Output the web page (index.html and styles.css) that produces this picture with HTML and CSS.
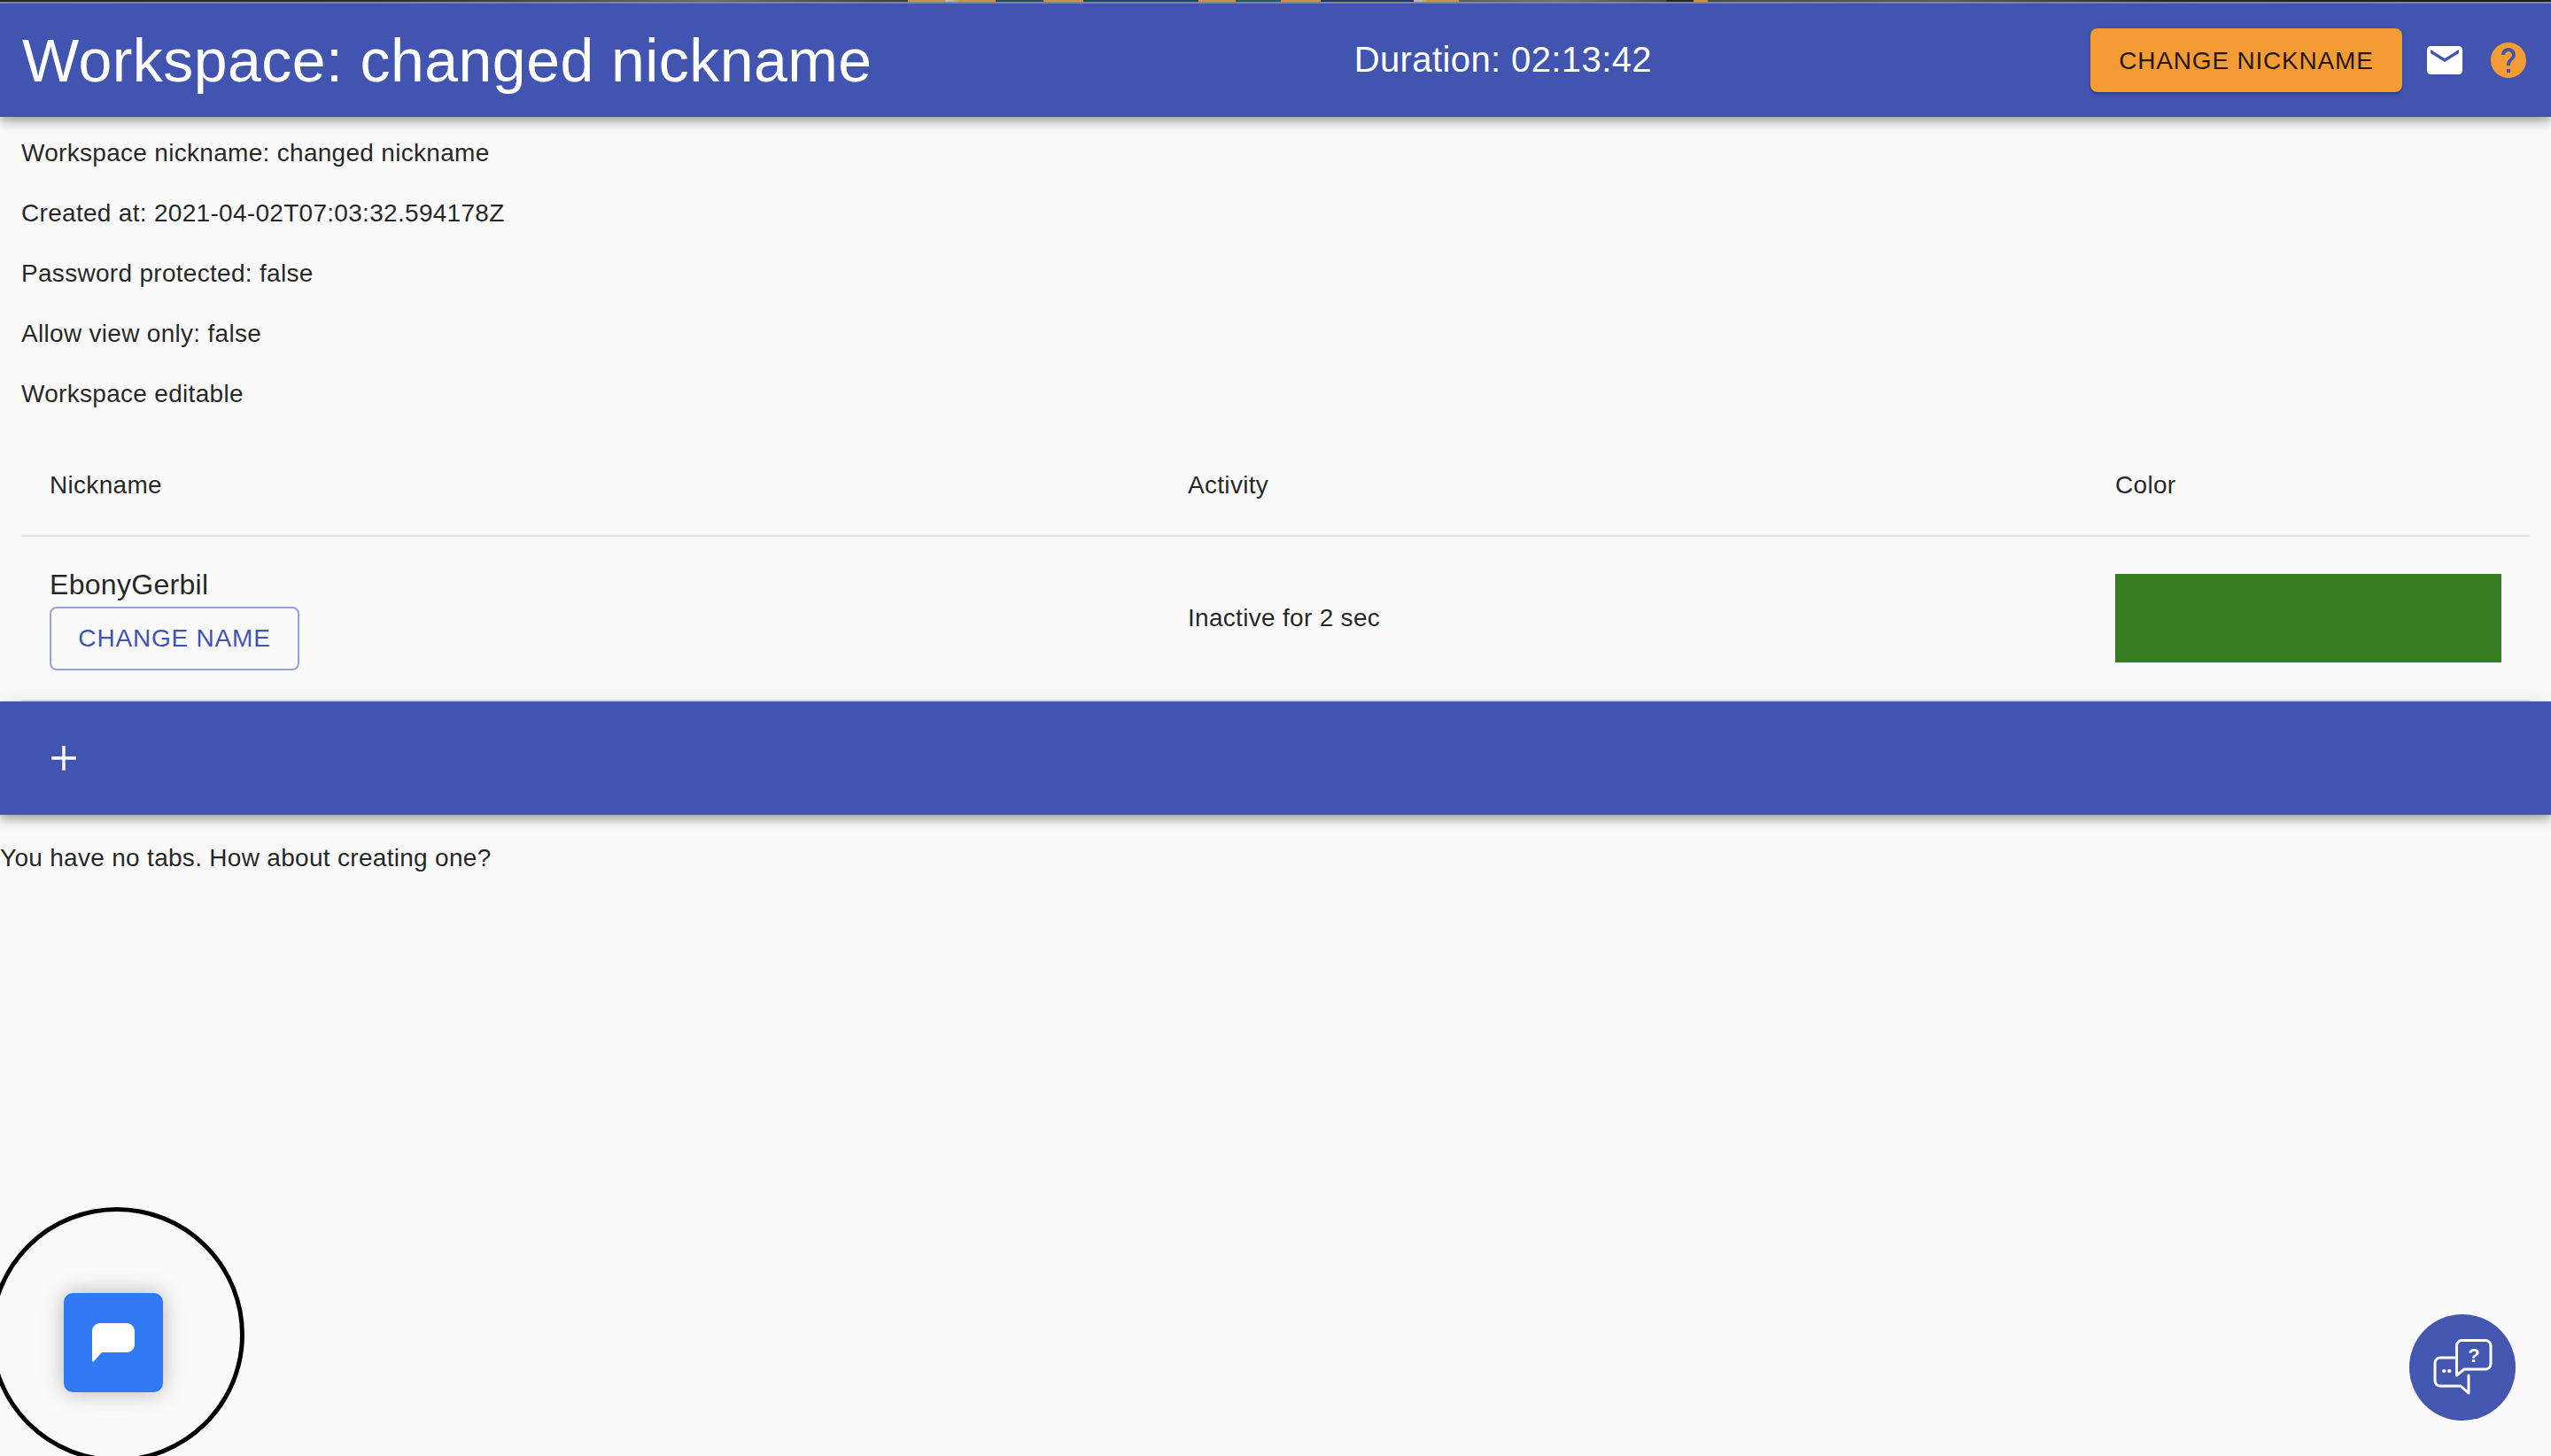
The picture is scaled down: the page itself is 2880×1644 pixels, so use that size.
FILE: index.html
```html
<!DOCTYPE html>
<html lang="en">
<head>
  <meta charset="UTF-8">
  <title>Workspace: changed nickname</title>
  <link rel="stylesheet" href="styles.css">
</head>
<body>
  <div class="top-strip"></div>

  <header class="app-bar">
    <h1 class="app-title">Workspace: changed nickname</h1>
    <div class="duration">Duration: 02:13:42</div>
    <div class="app-actions">
      <button class="btn-nickname">CHANGE NICKNAME</button>
      <svg class="icon-mail" viewBox="0 0 24 24"><path d="M20 4H4c-1.100 0-2 .9-2 2v12c0 1.100.9 2 2 2h16c1.100 0 2-.9 2-2V6c0-1.100-.9-2-2-2zm0 4l-8 5-8-5V6l8 5 8-5v2z"/></svg>
      <svg class="icon-help" viewBox="0 0 24 24"><path d="M12 2C6.480 2 2 6.480 2 12s4.480 10 10 10 10-4.480 10-10S17.520 2 12 2zm1 17h-2v-2h2v2zm2.070-7.750l-.9.920C13.450 12.900 13 13.500 13 15h-2v-.5c0-1.100.45-2.100 1.170-2.830l1.240-1.260c.37-.36.590-.86.590-1.410 0-1.100-.9-2-2-2s-2 .9-2 2H8c0-2.210 1.790-4 4-4s4 1.790 4 4c0 .88-.36 1.680-.93 2.250z"/></svg>
    </div>
  </header>

  <section class="info">
    <p>Workspace nickname: changed nickname</p>
    <p>Created at: 2021-04-02T07:03:32.594178Z</p>
    <p>Password protected: false</p>
    <p>Allow view only: false</p>
    <p>Workspace editable</p>
  </section>

  <table class="users">
    <thead>
      <tr>
        <th class="col-name">Nickname</th>
        <th class="col-activity">Activity</th>
        <th class="col-color">Color</th>
      </tr>
    </thead>
    <tbody>
      <tr>
        <td>
          <div class="user-name">EbonyGerbil</div>
          <button class="btn-name">CHANGE NAME</button>
        </td>
        <td>Inactive for 2 sec</td>
        <td><div class="color-box"></div></td>
      </tr>
    </tbody>
  </table>

  <div class="tab-bar">
    <svg class="icon-plus" viewBox="0 0 28 28"><path d="M12.300 0h3.400v12.300H28v3.400H15.700V28h-3.400V15.700H0v-3.400h12.300z"/></svg>
  </div>

  <p class="no-tabs">You have no tabs. How about creating one?</p>

  <!-- chat button with the ring drawn round it -->
  <div class="ring"></div>
  <div class="chat-btn">
    <svg viewBox="0 0 48 44"><path d="M9 0h30c5 0 9 4 9 9v15c0 5-4 9-9 9H11L2 43c-1 1-2 .5-2-1V9c0-5 4-9 9-9z"/></svg>
  </div>

  <div class="help-fab">
    <svg viewBox="0 0 68 66" fill="none" stroke="#fff" stroke-width="3" stroke-linecap="round" stroke-linejoin="round">
      <path d="M26 22H9a6 6 0 0 0-6 6v20a6 6 0 0 0 6 6h23l9 8V42"/>
      <path d="M33.500 2.500H60a6 6 0 0 1 6 6V29a6 6 0 0 1-6 6H36l-8.500 7V8.500a6 6 0 0 1 6-6z"/>
      <path d="M13 37h.5M19 37h.5" stroke-width="4"/>
      <text class="help-q" x="47" y="27">?</text>
    </svg>
  </div>
</body>
</html>
```

FILE: styles.css
```css
* {
  box-sizing: border-box;
}

html, body {
  height: 100%;
}

body {
  margin: 0;
  background: #fafafa;
  color: rgba(0, 0, 0, 0.87);
  font-family: "Liberation Sans", Arial, sans-serif;
  font-size: 28px;
  letter-spacing: 0.3px;
  overflow: hidden;
}

button {
  font-family: inherit;
  cursor: pointer;
}

.top-strip {
  height: 4px;
  border-bottom: 2px solid #8b908d;
  background: linear-gradient(to right,
    #23292a 0, #2b3332 446px, #6b7473 800px, #3c4342 1025px,
    #d99a3a 1025px, #d99a3a 1067px, #d8b4bc 1067px, #d8b4bc 1075px,
    #d99a3a 1083px, #d99a3a 1124px, #24506a 1124px, #24506a 1178px,
    #d99a3a 1178px, #d99a3a 1223px, #1f4a72 1223px, #1f4a72 1353px,
    #d99a3a 1353px, #d99a3a 1395px, #2a5f5f 1395px, #2a5f5f 1446px,
    #d99a3a 1446px, #d99a3a 1491px, #1e3a70 1491px, #1e3a70 1596px,
    #d8b4bc 1596px, #d8b4bc 1605px, #d99a3a 1611px, #d99a3a 1647px,
    #5b6664 1647px, #6f7a78 1760px, #4a5352 1880px, #23292a 1883px,
    #23292a 1912px, #d99a3a 1912px, #d99a3a 1928px, #4a5352 1928px,
    #5a6462 2200px, #23292a 2454px, #1c2122 2880px);
}

.app-bar {
  height: 128px;
  background: #4154b0;
  color: #fff;
  display: flex;
  align-items: center;
  padding: 0 24px 0 25px;
  box-shadow: 0 4px 8px -2px rgba(0, 0, 0, 0.2), 0 8px 10px 0 rgba(0, 0, 0, 0.14), 0 2px 20px 0 rgba(0, 0, 0, 0.12);
  position: relative;
}

.app-title {
  margin: 0;
  font-size: 68px;
  font-weight: 400;
  letter-spacing: 0.45px;
}

.duration {
  margin: -2px 0 0 544px;
  font-size: 40px;
  letter-spacing: 0.4px;
}

.app-actions {
  margin-left: auto;
  display: flex;
  align-items: center;
  gap: 24px;
}

.btn-nickname {
  width: 352px;
  height: 72px;
  padding-top: 2px;
  background: #f39c36;
  color: rgba(0, 0, 0, 0.87);
  border: 0;
  border-radius: 8px;
  font-size: 28px;
  letter-spacing: 0.8px;
  box-shadow: 0 3px 3px -1px rgba(0, 0, 0, 0.2), 0 2px 4px rgba(0, 0, 0, 0.14);
}

.icon-mail {
  width: 48px;
  height: 48px;
  fill: #fff;
}

.icon-help {
  width: 48px;
  height: 48px;
  fill: #f39c36;
}

.info {
  padding: 25px 24px 0;
}

.info p {
  margin: 0 0 36px;
  line-height: 32px;
}

.info p:last-child {
  margin-bottom: 31px;
}

.users {
  width: 2832px;
  margin: 0 24px;
  border-collapse: collapse;
  table-layout: fixed;
}

.users th {
  font-weight: 400;
  text-align: left;
  height: 113px;
  padding: 0 32px;
  border-bottom: 2px solid #e0e0e0;
}

.users td {
  padding: 0 32px;
  height: 186px;
  border-bottom: 2px solid #e0e0e0;
}

.col-name {
  width: 1285px;
}

.col-activity {
  width: 1047px;
}

.user-name {
  font-size: 32px;
  line-height: 42px;
}

.btn-name {
  display: block;
  width: 282px;
  height: 72px;
  margin-top: 4px;
  background: transparent;
  color: #4154b0;
  border: 2px solid #98a2d7;
  border-radius: 8px;
  font-size: 28px;
  letter-spacing: 0.8px;
}

.color-box {
  width: 436px;
  height: 100px;
  background: #387c22;
}

.tab-bar {
  height: 128px;
  background: #4154b0;
  display: flex;
  align-items: center;
  padding-left: 58px;
  box-shadow: 0 4px 8px -2px rgba(0, 0, 0, 0.2), 0 8px 10px 0 rgba(0, 0, 0, 0.14), 0 2px 20px 0 rgba(0, 0, 0, 0.12);
  position: relative;
}

.icon-plus {
  width: 28px;
  height: 28px;
  fill: #fff;
}

.no-tabs {
  margin: 33px 0 0;
  line-height: 32px;
}

.ring {
  position: absolute;
  left: -12px;
  top: 1363px;
  width: 288px;
  height: 288px;
  border: 5px solid #000;
  border-radius: 50%;
}

.chat-btn {
  position: absolute;
  left: 72px;
  top: 1460px;
  width: 112px;
  height: 112px;
  background: #307af5;
  border-radius: 10px;
  box-shadow: 0 0 24px rgba(0, 0, 0, 0.28);
  display: flex;
  align-items: center;
  justify-content: center;
}

.chat-btn svg {
  width: 48px;
  height: 44px;
  fill: #fff;
}

.help-fab {
  position: absolute;
  left: 2720px;
  top: 1484px;
  width: 120px;
  height: 120px;
  border-radius: 50%;
  background: #4356b0;
  display: flex;
  align-items: center;
  justify-content: center;
}

.help-fab svg {
  width: 68px;
  height: 66px;
}

.help-q {
  font-family: "Liberation Sans", Arial, sans-serif;
  font-size: 22px;
  font-weight: 700;
  fill: #fff;
  stroke: none;
  text-anchor: middle;
}
```
